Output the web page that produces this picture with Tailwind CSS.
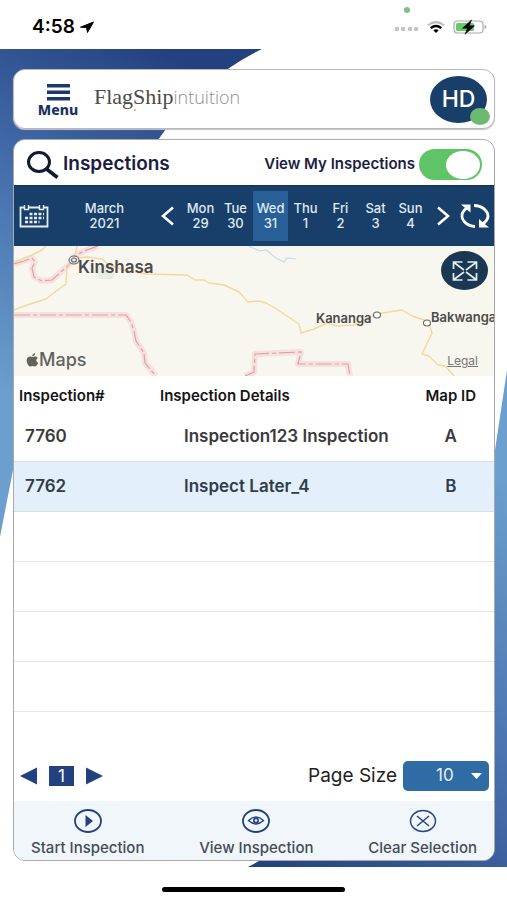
<!DOCTYPE html>
<html lang="en">
<head>
<meta charset="utf-8">
<meta name="viewport" content="width=device-width, initial-scale=1">
<title>FlagShip intuition – Inspections</title>
<script src="https://cdn.jsdelivr.net/npm/@tailwindcss/browser@4"></script>
</head>
<body class="flex min-h-screen flex-col bg-white font-['Inter',sans-serif] text-[#222]">

<!-- Status bar -->
<div class="relative flex h-[49px] items-center justify-between pr-5 pl-8">
  <div class="flex items-center gap-1 pt-1">
    <span class="text-[19px] leading-6 font-semibold text-black">4:58</span>
    <svg class="h-3 w-4" viewBox="0 0 16 12" aria-hidden="true"><path d="M14.500 1 1.500 6.200 7.500 6.500 8.500 11.500z" fill="#000" stroke="#000" stroke-linejoin="round"/></svg>
  </div>
  <div class="flex items-center gap-2 pt-1">
    <svg class="mt-1 h-1 w-6" viewBox="0 0 24 4" fill="#c4c4c4" aria-hidden="true"><rect width="4" height="4" rx="1"/><rect x="6" width="4" height="4" rx="1"/><rect x="13" width="4" height="4" rx="1"/><rect x="19" width="4" height="4" rx="1"/></svg>
    <svg class="h-3 w-[18px]" viewBox="0 0 18 12" fill="none" aria-hidden="true"><path d="M1 4.200Q9-2 17 4.200" stroke="#bbb" stroke-width="2"/><path d="M3.800 7Q9 2.800 14.200 7" stroke="#000" stroke-width="2.400"/><path d="M6.300 9.200Q9 7.400 11.700 9.200L9 12z" fill="#000"/></svg>
    <svg class="h-4 w-[34px]" viewBox="0 0 34 16" aria-hidden="true"><rect x="1" y="2" width="29" height="12" rx="3.500" fill="#fff" stroke="#aaa" stroke-width="1.200"/><rect x="3" y="4" width="18" height="8" rx="1.500" fill="#66c96a"/><path d="M31.500 6v4q2-.5 2-2t-2-2" fill="#aaa"/><path d="M18.500 1 9.500 9.200h5.200L12 15.200 21.500 6.800h-5.300z" fill="#000" stroke="#000" stroke-width=".6"/></svg>
  </div>
  <span class="absolute top-[7px] right-[97px] size-[6px] rounded-full bg-[#7cc088]"></span>
</div>

<main class="relative isolate flex flex-1 flex-col gap-[10px] px-[13px] pt-5 pb-[6px] pr-3">
  <!-- Decorative backdrop -->
  <svg class="absolute inset-0 -z-10 h-full w-full" viewBox="0 0 507 818" preserveAspectRatio="none" aria-hidden="true">
    <defs>
      <linearGradient id="left" gradientUnits="userSpaceOnUse" x1="160" y1="0" x2="-20" y2="330"><stop offset="0" stop-color="#24417f"/><stop offset=".5" stop-color="#4670ae"/><stop offset="1" stop-color="#6b9fcd"/></linearGradient>
      <linearGradient id="right" gradientUnits="userSpaceOnUse" x1="520" y1="440" x2="260" y2="818"><stop offset="0" stop-color="#6b9fcd"/><stop offset=".5" stop-color="#4a73b0"/><stop offset="1" stop-color="#24417f"/></linearGradient>
    </defs>
    <path d="M0 0H262Q200 30 158 91Q45 240 13 421L0 488Z" fill="url(#left)"/>
    <path d="M507 321 495 401Q440 720 248 818H507Z" fill="url(#right)"/>
  </svg>

  <header class="flex h-[60px] items-center rounded-xl border border-[#b9b9bd] bg-white pr-[7px] pl-5 shadow-[0_1px_1px_#c4c4c8]">
    <button type="button" class="flex w-12 flex-col items-center gap-px pt-1 text-[#1c3162]">
      <svg class="h-[17px] w-6" viewBox="0 0 24 17" fill="#1c3a66" aria-hidden="true"><rect x="1" width="23" height="3.500"/><rect x="1" y="6.500" width="23" height="3.500"/><rect x="1" y="13" width="23" height="3.500"/></svg>
      <span class="font-['Noto_Sans',sans-serif] text-[14px] leading-4 font-extrabold">Menu</span>
    </button>
    <div class="relative ml-3 flex items-baseline pb-1">
      <span class="font-['Liberation_Serif',serif] text-[22px] leading-7 text-[#4b4b46]">FlagShip</span>
      <span class="font-['Open_Sans',sans-serif] text-[18px] leading-7 font-light text-[#8d8d8d]">intuition</span>
      <span class="absolute bottom-1 left-10 size-[2px] rounded-full bg-[#d2b53c]"></span>
    </div>
    <button type="button" aria-label="Account HD" class="relative ml-auto flex h-[47px] w-[57px] items-center justify-center rounded-[50%] bg-[#183f69] text-[23px] font-medium text-white">HD
      <span class="absolute -right-[3px] -bottom-[2px] h-[17px] w-5 rounded-[50%] bg-[#6cba72]"></span>
    </button>
  </header>

  <section class="flex flex-1 flex-col overflow-hidden rounded-xl border border-[#a9a9ad] bg-white">
    <div class="flex h-[45px] items-center pt-1 pr-3 pl-3">
      <svg class="h-7 w-[33px]" viewBox="0 0 33 28" fill="none" stroke="#101b31" aria-hidden="true"><ellipse cx="13" cy="11" rx="10.500" ry="9.500" stroke-width="3"/><path d="m20.500 18 11 8.500" stroke-width="3.600"/></svg>
      <h1 class="ml-1 text-[19px] font-semibold text-[#1b1d3f]">Inspections</h1>
      <label for="mine" class="ml-auto text-[15px] font-semibold text-[#1b1d3f]">View My Inspections</label>
      <input id="mine" type="checkbox" role="switch" checked class="ml-1 flex h-[31px] w-[63px] appearance-none items-center justify-start rounded-full bg-[#a9a9ad] px-[2px] before:h-[28px] before:w-[34px] before:rounded-[50%] before:bg-white checked:justify-end checked:bg-[#5fc466]">
    </div>

    <nav aria-label="Week" class="flex h-[61px] items-center border-t border-[#12304f] bg-[#183f69] text-[13px] leading-[15px] font-medium text-[#dfe9f3]">
      <button type="button" aria-label="Calendar" class="flex w-10 justify-center">
        <svg class="h-6 w-[30px]" viewBox="0 0 30 24" fill="none" stroke="#e4edf6" aria-hidden="true"><path d="M5 3.500H1.500V22.500H28.500V3.500H25M10 3.500H20" stroke-width="1.800"/><path d="M5.500 1V5.500H9.500V1M20.500 1V5.500H24.500V1" stroke-width="1.400"/><path d="M10.500 10H25M6 14H25M6 18H20.500" stroke-width="2.600" stroke-dasharray="3 1.500"/></svg>
      </button>
      <div class="flex-1 text-center">March<br>2021</div>
      <button type="button" aria-label="Previous week" class="flex w-7 justify-center"><svg class="h-5 w-4" viewBox="0 0 16 20" fill="none" stroke="#fff" stroke-width="2.600" aria-hidden="true"><path d="M12 1.500 2 10l10 8.500"/></svg></button>
      <button type="button" class="h-[50px] w-[35px]">Mon<br>29</button>
      <button type="button" class="h-[50px] w-[35px]">Tue<br>30</button>
      <button type="button" aria-current="date" class="h-[50px] w-[35px] bg-[#285f97]">Wed<br>31</button>
      <button type="button" class="h-[50px] w-[35px]">Thu<br>1</button>
      <button type="button" class="h-[50px] w-[35px]">Fri<br>2</button>
      <button type="button" class="h-[50px] w-[35px]">Sat<br>3</button>
      <button type="button" class="h-[50px] w-[35px]">Sun<br>4</button>
      <button type="button" aria-label="Next week" class="flex w-7 justify-center"><svg class="h-5 w-4" viewBox="0 0 16 20" fill="none" stroke="#fff" stroke-width="2.600" aria-hidden="true"><path d="m4 1.500 10 8.500L4 18.500"/></svg></button>
      <button type="button" aria-label="Refresh" class="flex w-[38px] justify-center"><svg class="h-6 w-[30px]" viewBox="0 0 30 24" aria-hidden="true"><g fill="none" stroke="#fff" stroke-width="2.800"><path d="M15 22.500C7 22 1.500 16.500 2 11Q2.500 7 7 4"/><path d="M14 1.500C22 1.500 28 7 28 12.500Q27.500 17 22.500 20"/></g><path d="M1 .5H10.500V8.500ZM29 23.500H19V15Z" fill="#fff"/></svg></button>
    </nav>

    <!-- Map -->
    <div class="relative h-[130px] overflow-hidden bg-[#f7f6ef]">
      <svg class="h-full w-full" viewBox="0 0 480 130" preserveAspectRatio="xMidYMid slice" fill="none" role="img" aria-label="Map of Kinshasa, Kananga and Bakwanga">
        <rect x="84" y="19" width="16" height="14" rx="3" fill="#e8ede2"/>
        <g stroke="#f7e0de" stroke-width="6" stroke-linejoin="round">
          <path d="M0 18 10 15 18 12 21 16 18 22 20 31 28 35 38 34 48 25 57 17 61 10 70 5 84 0"/>
          <path d="M0 69H112L117 76 120 85 122 95 130 107 131 117 142 130"/>
          <path d="M231 130 240 126 241 108 287 106 284 118 334 118 336 130"/>
        </g>
        <g stroke="#dba3a6" stroke-width="1.200" stroke-dasharray="16 3 4 3">
          <path d="M0 18 10 15 18 12 21 16 18 22 20 31 28 35 38 34 48 25 57 17 61 10 70 5 84 0"/>
          <path d="M0 69H112L117 76 120 85 122 95 130 107 131 117 142 130"/>
          <path d="M231 130 240 126 241 108 287 106 284 118 334 118 336 130"/>
        </g>
        <g stroke="#f3d9a0" stroke-width="1.400" stroke-linejoin="round">
          <path d="M0 64 13 59 32 53 41 46 52 38 53 22 60 14 63 0M0 16 18 9 28 4 32 0"/>
          <path d="M61 12 74 11 88 13 95 19 110 24 132 28 173 29 181 34 190 34 195 37 210 39 225 46 234 56 245 55 252 57 261 62 270 68 285 78 287 87 300 83 313 77 323 80 340 79 362 68 388 64 398 70 410 74 415 77 418 87 408 108 415 110 424 119 431 120 440 130"/>
        </g>
        <path d="M234 0 246 5 252 4 262 12 270 16 273 12 282 13" stroke="#c8dceb" stroke-width="1.200"/>
        <g stroke="#666" stroke-width="1.100"><ellipse cx="60" cy="14" rx="5" ry="4" fill="#eee"/><ellipse cx="60" cy="14" rx="2.500" ry="2"/><ellipse cx="363" cy="69" rx="3.500" ry="3" fill="#fff"/><ellipse cx="413" cy="77" rx="3.500" ry="3" fill="#fff"/></g>
        <g fill="#4c4a4a" font-family="Inter, sans-serif" font-weight="600">
          <text x="64" y="27" font-size="17">Kinshasa</text>
          <text x="302" y="77" font-size="13">Kananga</text>
          <text x="417" y="76" font-size="13">Bakwanga</text>
        </g>
      </svg>
      <div class="absolute bottom-[6px] left-3 flex items-center text-[18px] leading-5 font-medium text-[#62625f]">
        <svg class="h-[14px] w-[13px]" viewBox="0 0 13 14" fill="currentColor" aria-hidden="true"><path d="M6.500 4C4.800 3.200 3 3.200 1.700 4.500.2 6 .3 9 1.800 11.400 3.500 14.200 4.600 13.500 6.500 13c2 .5 3 1 4.400-.9.600-.8 1-1.500 1.200-2.200C9.800 9 9.700 6 11.900 4.900 10.500 3.200 8.500 3.200 6.500 4ZM6.300 3.300C6.200 1.600 7.500.4 9.200 0 9.300 1.700 8.200 3.100 6.300 3.300Z"/></svg>Maps
      </div>
      <a href="#legal" class="absolute right-4 bottom-[7px] text-[12px] leading-4 text-[#777] underline">Legal</a>
      <button type="button" aria-label="Expand map" class="absolute top-[5px] right-[6px] flex h-[39px] w-[47px] items-center justify-center rounded-[50%] bg-[#1b3853]">
        <svg class="h-5 w-[26px]" viewBox="0 0 26 20" fill="none" stroke="#e4ecf4" stroke-width="1.700" aria-hidden="true"><path d="M1.500 8V1H10.500M15.500 1H24.500V8M24.500 12V19H15.500M10.500 19H1.500V12M2 1.500 12 9M24 1.500 14 9M24 18.500 14 11M2 18.500 12 11"/></svg>
      </button>
    </div>

    <table class="w-full table-fixed border-collapse text-left">
      <colgroup><col class="w-[30%]"><col><col class="w-[18%]"></colgroup>
      <thead>
        <tr class="h-[35px] text-[15px] leading-5 text-[#151515]">
          <th scope="col" class="pt-1 pl-[5px] font-semibold">Inspection#</th>
          <th scope="col" class="pt-1 pl-[2px] font-semibold">Inspection Details</th>
          <th scope="col" class="pt-1 text-center font-semibold">Map ID</th>
        </tr>
      </thead>
      <tbody class="text-[17px] leading-5 font-semibold text-[#3a3a3c]">
        <tr class="h-[50px] border-b border-[#d9dee2]"><td class="pl-[11px]">7760</td><td class="pl-[26px]">Inspection123 Inspection</td><td class="text-center">A</td></tr>
        <tr class="h-[50px] border-b border-[#d9dee2] bg-[#e3f0fb] text-[#303d4a]"><td class="pl-[11px]">7762</td><td class="pl-[26px]">Inspect Later_4</td><td class="text-center">B</td></tr>
        <tr class="h-[50px] border-b border-[#e6e6e6]"><td></td><td></td><td></td></tr>
        <tr class="h-[50px] border-b border-[#e6e6e6]"><td></td><td></td><td></td></tr>
        <tr class="h-[50px] border-b border-[#e6e6e6]"><td></td><td></td><td></td></tr>
        <tr class="h-[50px] border-b border-[#e6e6e6]"><td></td><td></td><td></td></tr>
      </tbody>
    </table>

    <div class="mt-auto flex items-center pr-[5px] pb-[10px] pl-[6px]">
      <button type="button" aria-label="Previous page"><svg class="h-[18px] w-[17px]" viewBox="0 0 17 18" fill="#24417f" aria-hidden="true"><path d="M17 .5V17.500L0 9z"/></svg></button>
      <button type="button" aria-current="page" class="mx-3 h-5 w-[25px] bg-[#24417f] text-[17px] leading-5 text-white">1</button>
      <button type="button" aria-label="Next page"><svg class="h-[18px] w-[17px]" viewBox="0 0 17 18" fill="#24417f" aria-hidden="true"><path d="M0 .5V17.500L17 9z"/></svg></button>
      <label for="size" class="ml-auto text-[19px] leading-6">Page Size</label>
      <div class="relative ml-[6px]">
        <select id="size" class="block h-[30px] w-[86px] appearance-none rounded-[5px] bg-[#2f6ba4] pl-[33px] text-[17px] text-[#e6f0f8]"><option>10</option><option>20</option><option>50</option></select>
        <svg class="pointer-events-none absolute top-3 right-[7px] h-[6px] w-[11px]" viewBox="0 0 11 6" fill="#fff" aria-hidden="true"><path d="M0 0H11L5.500 6z"/></svg>
      </div>
    </div>

    <div class="flex h-[59px] items-start justify-between bg-[#f1f6fa] px-[17px] pt-2 text-[15px] leading-4 font-medium text-[#454b57]">
      <button type="button" class="flex flex-col items-center gap-[7px]">
        <svg class="h-6 w-7" viewBox="0 0 28 24" aria-hidden="true"><ellipse cx="14" cy="12" rx="13" ry="11" fill="none" stroke="#24417f" stroke-width="1.800"/><path d="M11.500 6V18L19 12z" fill="#24417f"/></svg>
        Start Inspection
      </button>
      <button type="button" class="flex flex-col items-center gap-[7px]">
        <svg class="h-6 w-7" viewBox="0 0 28 24" fill="none" stroke="#24417f" aria-hidden="true"><ellipse cx="14" cy="12" rx="13" ry="11" stroke-width="1.800"/><path d="M6.500 11.500Q14 4.500 21.500 11.500Q14 18.500 6.500 11.500Z" stroke-width="1.300"/><ellipse cx="14" cy="11.500" rx="2.200" ry="2" stroke-width="1.600"/></svg>
        View Inspection
      </button>
      <button type="button" class="flex flex-col items-center gap-[7px]">
        <svg class="h-6 w-7" viewBox="0 0 28 24" fill="none" stroke="#2b4787" aria-hidden="true"><ellipse cx="14" cy="12" rx="12.500" ry="10.500" stroke-width="1.500"/><path d="m8 7 12 10M20 7 8 17" stroke-width="1.600"/></svg>
        Clear Selection
      </button>
    </div>
  </section>
</main>

<div class="flex h-[33px] items-center justify-center pt-3"><div class="h-[5px] w-[36%] rounded-full bg-black"></div></div>
</body>
</html>
